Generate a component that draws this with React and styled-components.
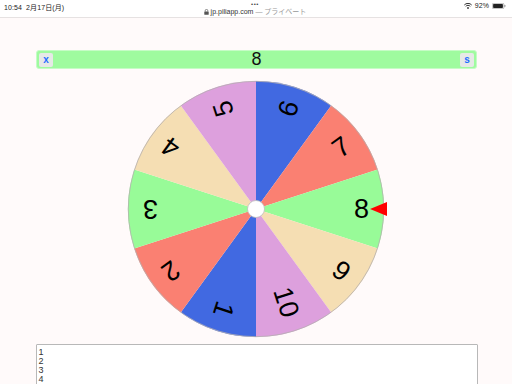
import styled, { createGlobalStyle } from 'styled-components'

const Global = createGlobalStyle`
  html, body {
    margin: 0;
    padding: 0;
    background: #fffafa;
    font-family: "Liberation Sans", "Noto Sans CJK JP", Arial, sans-serif;
    overflow: hidden;
  }
`

const COLORS = ['#4169e1', '#fa8072', '#98fb98', '#f5deb3', '#dda0dd']
const LABELS = [6, 7, 8, 9, 10, 1, 2, 3, 4, 5]

const CX = 129
const CY = 129
const R = 128

function point(deg, r) {
  const a = (deg - 90) * Math.PI / 180
  return [CX + r * Math.cos(a), CY + r * Math.sin(a)]
}

function Wheel() {
  return (
    <svg width={258} height={258} viewBox="0 0 258 258">
      {LABELS.map((label, i) => {
        const start = i * 36
        const [x1, y1] = point(start, R)
        const [x2, y2] = point(start + 36, R)
        return (
          <path
            key={label}
            d={`M${CX} ${CY} L${x1} ${y1} A${R} ${R} 0 0 1 ${x2} ${y2} Z`}
            fill={COLORS[i % 5]}
          />
        )
      })}
      <circle cx={CX} cy={CY} r={R - 0.3} fill="none" stroke="#b5b0b0" strokeWidth="0.8" />
      {LABELS.map((label, i) => (
        <text
          key={'t' + label}
          x={CX + 113}
          y={CY}
          textAnchor="end"
          dominantBaseline="central"
          fontSize="27"
          fontFamily='"Liberation Sans", Arial, sans-serif'
          fill="#000"
          transform={`rotate(${i * 36 + 18 - 90} ${CX} ${CY})`}
        >
          {label}
        </text>
      ))}
      <circle cx={CX} cy={CY} r={8.5} fill="#fff" stroke="#bbb" strokeWidth="0.8" />
    </svg>
  )
}

function App() {
  return (
    <>
      <Global />
      <StatusBar>
        <Side>10:54&nbsp;&nbsp;2月17日(月)</Side>
        <Center>
          <Dots>•••</Dots>
          <Url>
            <svg width="5" height="6" viewBox="0 0 5 6">
              <rect x="0.3" y="2.5" width="4.4" height="3.3" rx="0.5" fill="#555" />
              <path d="M1.2 2.6 V1.7 a1.3 1.3 0 0 1 2.6 0 V2.6" stroke="#555" strokeWidth="0.7" fill="none" />
            </svg>
            <span>jp.piliapp.com</span>
            <Muted>— プライベート</Muted>
          </Url>
        </Center>
        <Side $right>
          <svg width="8" height="6" viewBox="0 0 8 6">
            <path d="M0.3 2 A5 5 0 0 1 7.7 2" stroke="#333" strokeWidth="1" fill="none" />
            <path d="M1.7 3.4 A3 3 0 0 1 6.3 3.4" stroke="#333" strokeWidth="1" fill="none" />
            <circle cx="4" cy="5" r="0.9" fill="#333" />
          </svg>
          <span>92%</span>
          <svg width="14" height="6" viewBox="0 0 14 6">
            <rect x="0.3" y="0.3" width="11.6" height="5.4" rx="1.3" fill="none" stroke="#888" strokeWidth="0.6" />
            <rect x="1.1" y="1.1" width="9.8" height="3.8" rx="0.6" fill="#222" />
            <rect x="12.4" y="2" width="1" height="2" rx="0.4" fill="#888" />
          </svg>
        </Side>
      </StatusBar>
      <Main>
        <ResultBar>
          <SmallButton>x</SmallButton>
          <Result>8</Result>
          <SmallButton>s</SmallButton>
        </ResultBar>
        <WheelWrap>
          <Wheel />
          <Pointer />
        </WheelWrap>
        <Items readOnly defaultValue={'1\n2\n3\n4\n5\n6\n7\n8\n9\n10'} />
      </Main>
    </>
  )
}

const StatusBar = styled.div`
  height: 17px;
  background: #fff;
  border-bottom: 1px solid #e6e2e2;
  display: flex;
  justify-content: space-between;
  align-items: flex-start;
  padding: 0 6px 0 4px;
  font-size: 7px;
  color: #222;
`

const Side = styled.div`
  width: 120px;
  padding-top: 2px;
  display: flex;
  align-items: center;
  justify-content: ${p => (p.$right ? 'flex-end' : 'flex-start')};
  gap: 3px;
  letter-spacing: 0.1px;
`

const Center = styled.div`
  display: flex;
  flex-direction: column;
  align-items: center;
`

const Dots = styled.div`
  font-size: 6px;
  line-height: 8px;
  color: #444;
  letter-spacing: 0.5px;
`

const Url = styled.div`
  display: flex;
  align-items: center;
  gap: 2px;
  line-height: 8px;
  color: #333;
`

const Muted = styled.span`
  color: #999;
`

const Main = styled.div`
  display: flex;
  flex-direction: column;
  align-items: center;
  padding-top: 32px;
`

const ResultBar = styled.div`
  width: 441px;
  height: 19px;
  box-sizing: border-box;
  margin-left: 1px;
  background: #9ffb9f;
  border: 1px solid #c6fcc6;
  border-radius: 3px;
  display: flex;
  align-items: center;
  justify-content: space-between;
  padding: 0 2px;
`

const SmallButton = styled.div`
  width: 14px;
  height: 14px;
  background: #e6e9e6;
  border-radius: 2px;
  color: #1f6fff;
  font-size: 10px;
  font-weight: bold;
  line-height: 13px;
  text-align: center;
`

const Result = styled.div`
  font-size: 18px;
  line-height: 19px;
  color: #111;
`

const WheelWrap = styled.div`
  position: relative;
  width: 258px;
  height: 258px;
  margin-top: 11px;
`

const Pointer = styled.div`
  position: absolute;
  left: 243px;
  top: 122px;
  width: 0;
  height: 0;
  border-top: 7px solid transparent;
  border-bottom: 7px solid transparent;
  border-right: 17px solid #ff0000;
`

const Items = styled.textarea`
  margin-top: 6px;
  margin-left: 1px;
  width: 442px;
  height: 120px;
  box-sizing: border-box;
  border: 1px solid #b8b8b8;
  border-radius: 1px;
  background: #fff;
  padding: 3px 2px;
  font-family: "Liberation Sans", Arial, sans-serif;
  font-size: 9px;
  line-height: 9px;
  color: #333;
  resize: none;
  outline: none;
`

export default App
